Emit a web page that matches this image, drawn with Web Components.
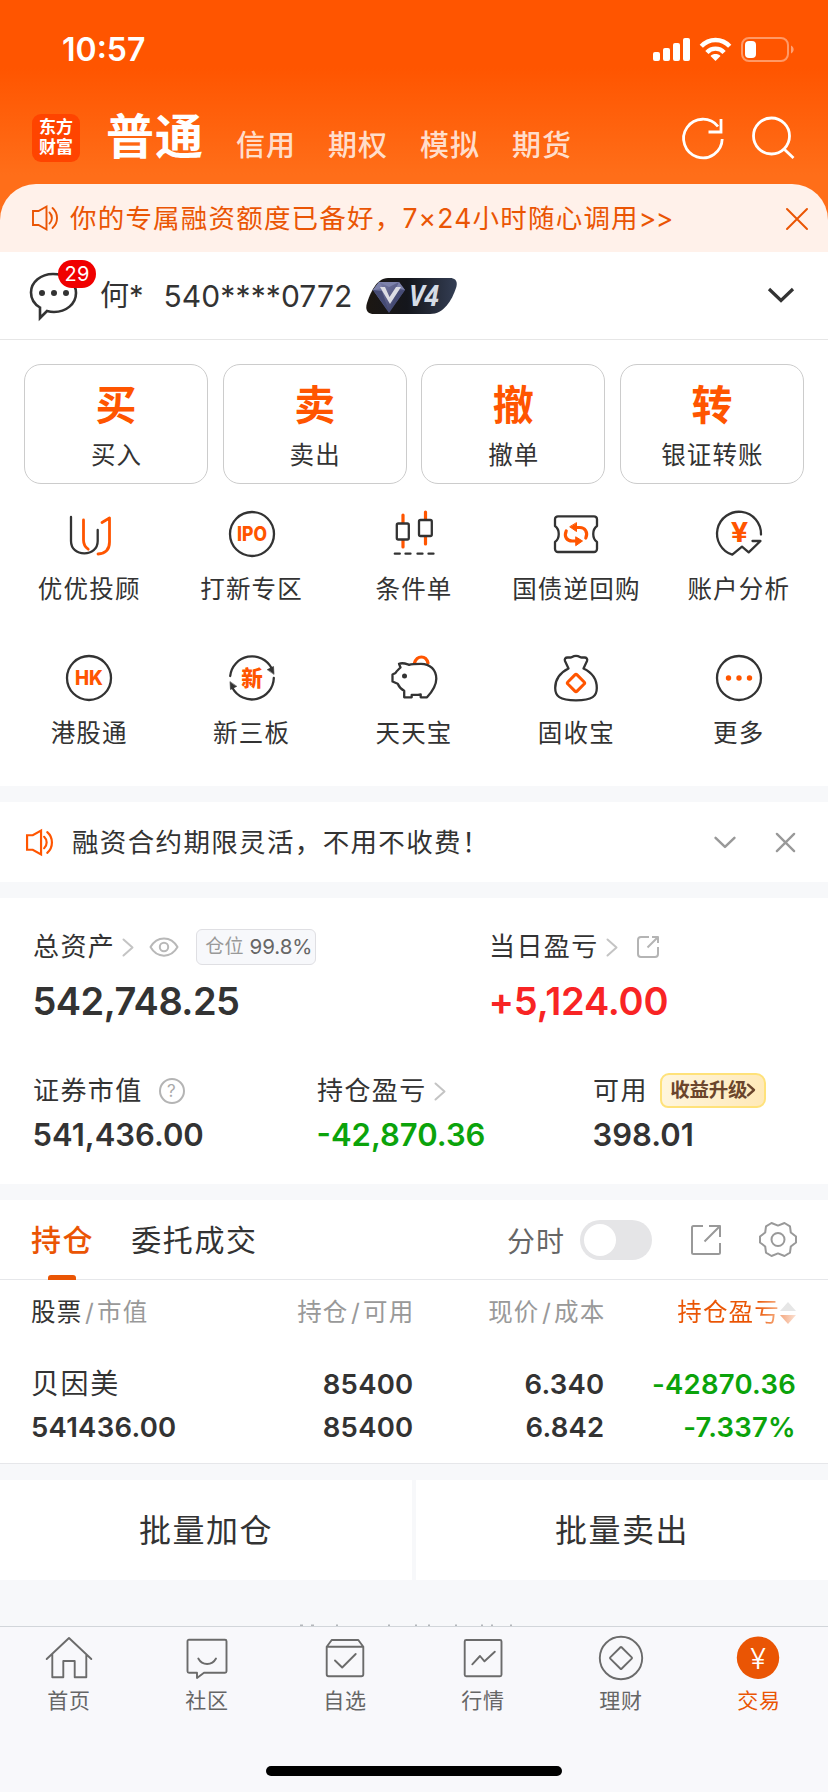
<!DOCTYPE html>
<html lang="zh-CN">
<head>
<meta charset="utf-8">
<title>交易</title>
<style>
  html, body {
    margin: 0;
    padding: 0;
  }
  body {
    width: 828px;
    height: 1792px;
    overflow: hidden;
    background: #f7f8fa;
    color: #333;
    font-family: Inter, "Noto Sans CJK SC", sans-serif;
  }
</style>
</head>
<body>
<trade-page></trade-page>

<script>
// Small base class: every component only declares its own template
class BaseElement extends HTMLElement {
  constructor() {
    super();
    this.attachShadow({ mode: 'open' });
  }

  connectedCallback() {
    this.shadowRoot.innerHTML = this.render();
  }

  attr(name, fallback = '') {
    return this.getAttribute(name) || fallback;
  }
}

const DARK = '#333';
const ORANGE = '#ff5500';

const icons = {
  // Header
  refresh: `<path d="M43.2 25A19.3 19.3 0 1 1 39 12.5"/><path d="M42 5v13H29.5"/>`,
  search: `<circle cx="22.5" cy="22" r="18"/><path d="M35.5 35.500L44.500 44"/>`,
  speaker: `<path d="M2 7h5.500l8-4.500v23L7.500 21H2z"/><path d="M18.500 8.500c3.200 3 3.200 8 0 11M21.500 4c6 5.200 6 14.800 0 20"/>`,
  close: `<path d="M3 3l20 20M23 3L3 23"/>`,
  down: `<path d="M2 2l12 11.500L26 2"/>`,
  right: `<path d="M1.500 1.500l9 8-9 8"/>`,
  bubble: `<path d="M11 36.500C5 33 2 27.500 2 21.500 2 11 12 3 24 3s23 8 23 19-10 19-22 19c-2.500 0-4.500-.3-7-1L11 47z"/><g fill="#333" stroke="none"><circle cx="13" cy="22" r="3"/><circle cx="25" cy="22" r="3"/><circle cx="37" cy="22" r="3"/></g>`,

  // Quick entries
  advisor: `<path d="M6 7v24c0 8 6 12.300 13.300 12.300S32.700 39 32.700 31V20"/><path d="M18.500 10v20c0 4 1.500 7 4.700 9.200M37 12.500l7.500-4.500v24c0 7-4 11.500-11.500 12" stroke="#ff5500" stroke-width="2.800"/>`,
  ipo: `<circle cx="24" cy="24" r="22"/><text x="24" y="31" font-size="19.500" textLength="30" lengthAdjust="spacingAndGlyphs">IPO</text>`,
  candle: `<path d="M13 5v32M35.500 2v32" stroke="#ff5500" stroke-width="3.200"/><rect x="6.800" y="13.500" width="12" height="16" rx="1.500" fill="#fff"/><rect x="29" y="10" width="12.800" height="16" rx="1.500" fill="#fff"/><path d="M4.800 43.700h5M15.500 43.700h5M27.500 43.700h5M38.500 43.700h5"/>`,
  repo: `<path d="M6 6.300h36a3 3 0 0 1 3 3V16c-5 3.500-5 12.500 0 16v7a3 3 0 0 1-3 3H6a3 3 0 0 1-3-3v-7c5-3.500 5-12.500 0-16V9.300a3 3 0 0 1 3-3z"/><g stroke="#ff5500" stroke-width="3.200"><path d="M14.200 21c-2.500 6 1 10 6 10H25M33.800 28c2.500-6-1-10.500-6-10.500H23"/></g><path d="M24 27l6.500 4-6.500 4.500zM24.500 13v8.500L18 17z" fill="#ff5500" stroke="#ff5500" stroke-width="1"/>`,
  analysis: `<path d="M46 24.500A22 22 0 1 0 17.300 44.700L27 36.700l6.700 5.600L45.500 31h-8"/><text x="24.400" y="32.300" font-size="26.500" style="font-weight:700" textLength="17.500" lengthAdjust="spacingAndGlyphs">¥</text>`,
  hk: `<circle cx="24" cy="24" r="22"/><text x="24" y="31" font-size="19.500" textLength="28" lengthAdjust="spacingAndGlyphs">HK</text>`,
  otc: `<path d="M2.200 22A22 22 0 0 1 43.500 14M45.800 24A22 22 0 0 1 4.500 34"/><path d="M39.500 15.500l6-3 .5 7.500zM8.500 32.500l-6 3-.5-7.500z" fill="#333" stroke-width=".6"/><text x="24" y="31.500" font-size="21.500">新</text>`,
  piggy: `<path d="M24.500 9c2.500-8 11.500-8 13.500 0" stroke="#ff5500" stroke-width="3.200"/><path d="M9 9.800c4-1.500 7 0 10 1 3-1 8-1 12-1 9 0 15.300 6 15.300 15 0 6-2.800 11.500-9.300 18.500h-6.300v-3c-3 .8-6 .8-9 .5v2.500h-7.500v-6.500c-3-1.500-5-3.500-6.500-7L2.500 27.500v-7l3-1.500c1.500-2.500 2.500-3 5-5.500z"/><circle cx="14.500" cy="22" r="2.500" fill="#333" stroke="none"/>`,
  bag: `<path d="M16.500 14.500L13 7c-.8-2 .5-3.500 2.500-3.500h3c1.500 0 2-1.700 5.500-1.700s4 1.700 5.500 1.700h3c2 0 3.300 1.500 2.500 3.500l-3.500 7.500C40 18.500 44.800 25.500 44.800 34c0 8-4 12.300-20.800 12.300S3.200 42 3.200 34c0-8.500 5.300-15.500 13.300-19.500z"/><rect x="17.500" y="22.500" width="13" height="13" rx="1.500" transform="rotate(45 24 29)" stroke="#ff5500" stroke-width="3"/>`,
  more: `<circle cx="24" cy="24" r="22"/><g fill="#ff5500" stroke="none"><circle cx="13.500" cy="24" r="2.700"/><circle cx="24" cy="24" r="2.700"/><circle cx="34.500" cy="24" r="2.700"/></g>`,

  // Assets and holdings
  eye: `<path d="M1.500 10C8-1.500 22-1.500 28.500 10 22 21.500 8 21.500 1.500 10z"/><circle cx="15" cy="10" r="4.200"/>`,
  share: `<path d="M12 1H4a3 3 0 0 0-3 3v14a3 3 0 0 0 3 3h14a3 3 0 0 0 3-3v-7M15 1h6v6M21 1L10.500 11.500"/>`,
  help: `<circle cx="13" cy="13" r="12"/><text x="13" y="19" font-size="17" style="font-weight:400;fill:#aaa;stroke:none">?</text>`,
  export: `<path d="M12 1H2.500A1.500 1.500 0 0 0 1 2.500v25A1.500 1.500 0 0 0 2.500 29h25a1.500 1.500 0 0 0 1.500-1.500V18M18 1h11v11M29 1L13.500 16.500"/>`,
  gear: `<path d="M12.500 2l6.500 2.600L25.500 2l5.500 3.300.8 6.200 5.200 4v6l-5.200 4-.8 6.200-5.500 3.300-6.500-2.600L12.500 35 7 31.700l-.8-6.200-5.200-4v-6l5.200-4L7 5.300z"/><circle cx="19" cy="18.500" r="6.500"/>`,

  // Tab bar
  home: `<path d="M1.700 25L24 4l22.300 21M7.300 20.300v22.900h11V27h11.400v16.200h11.600V20.300"/>`,
  community: `<path d="M6 5.700h36a1.500 1.500 0 0 1 1.500 1.500v30a1.500 1.500 0 0 1-1.500 1.500H21L14 44v-5.300H6a1.500 1.500 0 0 1-1.500-1.500v-30A1.500 1.500 0 0 1 6 5.700z"/><path d="M15.300 24.500c4 7.300 13.700 7.300 17.700 0"/>`,
  favorite: `<path d="M5.700 12.700h36.600v27.500a2 2 0 0 1-2 2H7.700a2 2 0 0 1-2-2zL10.700 6h26.600l5 6.700"/><path d="M14 26.500l7.200 7L34.700 20"/>`,
  market: `<rect x="5.700" y="6" width="36.800" height="36.300" rx="1.500"/><path d="M13.300 30.300L21 22l4.500 5.300 10.300-9.600"/>`,
  wealth: `<circle cx="24" cy="24" r="21.200"/><rect x="16" y="16" width="16" height="16" rx=".8" transform="rotate(45 24 24)"/>`,
  trade: `<circle cx="23" cy="23.700" r="21.200" fill="#ea5504" stroke="none"/><text x="23" y="34.500" font-size="29" style="font-weight:300;fill:#fff;stroke:none">¥</text>`
};

class UiIcon extends BaseElement {
  render() {
    const w = this.attr('w', '48');
    const h = this.attr('h', w);
    return `
      <style>
        :host { display: block; flex: none; width: ${w}px; height: ${h}px; }
        svg { display: block; overflow: visible; }
        text { font-family: Inter, "Noto Sans CJK SC", sans-serif; font-weight: 800; text-anchor: middle; fill: ${ORANGE}; stroke: none; }
      </style>
      <svg width="${w}" height="${h}" viewBox="${this.attr('box', `0 0 ${w} ${h}`)}" fill="none"
        stroke="${this.attr('color', DARK)}" stroke-width="${this.attr('stroke', '2.3')}"
        stroke-linecap="${this.attr('cap', 'round')}" stroke-linejoin="${this.attr('join', 'round')}">${icons[this.attr('name')]}</svg>
    `;
  }
}

class StatusBar extends BaseElement {
  render() {
    return `
      <style>
        :host { display: flex; justify-content: space-between; height: 99px; padding: 0 33px 0 62px; color: #fff; }
        .time { font-size: 32px; font-weight: 600; line-height: 100px; }
        svg { margin-top: 37px; }
      </style>
      <span class="time">10:57</span>
      <svg width="142" height="26" viewBox="0 0 142 26" fill="#fff">
        <rect x="0" y="15" width="7" height="9" rx="2"/>
        <rect x="10" y="11" width="7" height="13" rx="2"/>
        <rect x="20" y="6" width="7" height="18" rx="2"/>
        <rect x="30" y="1" width="7" height="23" rx="2"/>
        <path d="M62.500 24l-5-5c2.500-2.600 7.500-2.600 10 0z"/>
        <g fill="none" stroke="#fff" stroke-width="4.400">
          <path d="M48.300 9.300c7.700-8.400 20.700-8.400 28.400 0"/>
          <path d="M53.900 15.400c4.600-5 12.600-5 17.200 0"/>
        </g>
        <rect x="89" y="1" width="46" height="23" rx="7" fill="none" stroke="#fff" stroke-opacity=".4" stroke-width="2"/>
        <rect x="92" y="4" width="11" height="17" rx="4"/>
        <path d="M138 8.500c3.500 1.500 3.500 6.500 0 8z" fill-opacity=".45"/>
      </svg>
    `;
  }
}

class AppHeader extends BaseElement {
  render() {
    return `
      <style>
        :host { display: flex; height: 85px; padding: 0 31px 0 32px; color: #fff; }
        .logo { display: flex; flex-direction: column; align-items: center; box-sizing: border-box; width: 48px; height: 48px; margin-top: 15px; padding-top: 4px;
          border-radius: 9px; background: #ff4400; font-family: "Liberation Sans", "Noto Sans CJK SC", sans-serif; font-size: 17px; font-weight: 700; line-height: 20px; }
        .active { margin: 6px 0 0 26px; font-size: 48px; font-weight: 700; line-height: 64px; letter-spacing: 1px; }
        nav { display: flex; gap: 32px; margin: 25px 0 0 32px; }
        nav span { font-size: 29px; font-weight: 500; line-height: 44px; letter-spacing: 1px; color: rgba(255, 255, 255, .8); }
        .tools { display: flex; gap: 22px; margin: 15px 0 0 auto; }
      </style>
      <div class="logo"><span>东方</span><span>财富</span></div>
      <span class="active">普通</span>
      <nav><span>信用</span><span>期权</span><span>模拟</span><span>期货</span></nav>
      <div class="tools">
        <ui-icon name="refresh" w="48" color="#fff" stroke="2.800" cap="butt" join="miter"></ui-icon>
        <ui-icon name="search" w="48" color="#fff" stroke="2.800" cap="butt"></ui-icon>
      </div>
    `;
  }
}

class PromoBanner extends BaseElement {
  render() {
    return `
      <style>
        :host { display: flex; align-items: center; height: 68px; padding: 0 20px 0 31px; border-radius: 36px 36px 0 0; background: #fff1ea; color: #ea5504; }
        span { margin-left: 11px; font-size: 26.500px; line-height: 40px; letter-spacing: 1.200px; white-space: nowrap; }
        ::slotted(i) { font-style: normal; letter-spacing: -.7px; }
        .close { margin: 1px 0 0 auto; }
      </style>
      <ui-icon name="speaker" w="28" color="#ea5504" stroke="1.900" join="miter"></ui-icon>
      <span><slot></slot></span>
      <ui-icon class="close" name="close" w="22" box="2 2 22 22" color="#ea5504" stroke="2"></ui-icon>
    `;
  }
}

class VipBadge extends BaseElement {
  render() {
    return `
      <style>
        :host { display: block; width: 91px; height: 36px; }
        svg { display: block; }
        text { font-family: "Open Sans", sans-serif; font-weight: 700; font-style: italic; }
      </style>
      <svg width="91" height="36" viewBox="0 0 91 36">
        <defs>
          <linearGradient id="bg"><stop offset="0" stop-color="#1c1712"/><stop offset=".45" stop-color="#14161c"/><stop offset="1" stop-color="#343e54"/></linearGradient>
          <linearGradient id="gem" x1="0" y1="0" x2="1" y2="1"><stop offset="0" stop-color="#8084b0"/><stop offset="1" stop-color="#30345a"/></linearGradient>
        </defs>
        <path d="M22 0h62c6 0 8 4 6 10-4 12-12 26-26 26H8c-7 0-9-5-7-11C4 16 10 0 22 0z" fill="url(#bg)"/>
        <path d="M13 4h20l6 8-16 23L7 12z" fill="url(#gem)"/>
        <path d="M7 12l9 1 7 21zM39 12l-8 1-8 21z" fill="#454b74"/>
        <path d="M13 4l4 6-10 2zM33 4l-3 6 9 2zM13 4h20l-10 5z" fill="#7d82ab"/>
        <path d="M14 9h5l4.500 10L30 9h5L24 26z" fill="#dcdde4"/>
        <text x="43" y="28" font-size="28" textLength="30" lengthAdjust="spacingAndGlyphs" fill="#d5dce6">V4</text>
      </svg>
    `;
  }
}

class AccountBar extends BaseElement {
  render() {
    return `
      <style>
        :host { display: flex; height: 87px; padding: 0 34px 0 29px; border-bottom: 1px solid #e6e6e6; background: #fff; }
        .msg { position: relative; width: 50px; margin-top: 19px; }
        .count { position: absolute; left: 29px; top: -11px; width: 38px; height: 28px; border-radius: 14px; background: #f00000; color: #fff; font-size: 20px; line-height: 28px; letter-spacing: .2px; text-align: center; }
        .name, .no { font-size: 30px; line-height: 88px; white-space: nowrap; }
        .name { margin-left: 21px; font-size: 29px; }
        .no { width: 188px; margin-left: 20px; letter-spacing: .1px; }
        vip-badge { margin: 26px 0 0 14px; }
        .arrow { margin: 35px 0 0 auto; }
      </style>
      <div class="msg">
        <ui-icon name="bubble" w="50" stroke="2.600" join="miter"></ui-icon>
        <span class="count">29</span>
      </div>
      <span class="name">何*</span>
      <span class="no">540****0772</span>
      <vip-badge></vip-badge>
      <ui-icon class="arrow" name="down" w="26" h="15" box="1 0 26 15" stroke="3.200" cap="butt" join="miter"></ui-icon>
    `;
  }
}

class TradeButton extends BaseElement {
  render() {
    return `
      <style>
        :host { display: flex; flex-direction: column; align-items: center; box-sizing: border-box; height: 120px; border: 1.500px solid #ccc; border-radius: 17px; }
        b { margin-top: 13px; color: ${ORANGE}; font-size: 41px; font-weight: 700; line-height: 54px; }
        span { margin-top: 7px; font-size: 24.500px; line-height: 32px; letter-spacing: 1.100px; margin-right: -1px; }
      </style>
      <b>${this.attr('mark')}</b>
      <span><slot></slot></span>
    `;
  }
}

class QuickEntry extends BaseElement {
  render() {
    return `
      <style>
        :host { display: flex; flex-direction: column; align-items: center; height: 144px; }
        span { margin-top: 15px; font-size: 24.500px; line-height: 32px; letter-spacing: 1.200px; white-space: nowrap; }
      </style>
      <ui-icon name="${this.attr('icon')}"></ui-icon>
      <span><slot></slot></span>
    `;
  }
}

class NoticeBar extends BaseElement {
  render() {
    return `
      <style>
        :host { display: flex; align-items: center; height: 80px; margin: 16px 0; padding: 0 33px 0 25px; background: #fff; }
        span { margin-left: 18px; font-size: 26.500px; line-height: 40px; letter-spacing: 1.350px; }
        .down { margin-left: auto; }
        .close { margin-left: 40px; }
      </style>
      <ui-icon name="speaker" w="29" box="0 0 28 28" color="${ORANGE}" stroke="2.100" join="miter"></ui-icon>
      <span><slot></slot></span>
      <ui-icon class="down" name="down" w="22" h="13" box="0 0 28 16" color="#999" stroke="3.200"></ui-icon>
      <ui-icon class="close" name="close" w="19" box="2 2 22 22" color="#999" stroke="2.700"></ui-icon>
    `;
  }
}

class AssetItem extends BaseElement {
  render() {
    return `
      <style>
        :host { display: block; }
        .label { display: flex; align-items: center; height: 36px; font-size: 26px; line-height: 36px; letter-spacing: 1.400px; white-space: nowrap; }
        .value { font-size: 31px; font-weight: 600; line-height: 40px; margin: 6px 0 0 -.5px; color: var(--value-color, #333); }
        :host([size="large"]) .value { font-size: 38px; line-height: 48px; margin-top: 12px; letter-spacing: var(--value-spacing, -.55px); }
      </style>
      <div class="label">${this.attr('label')}<slot></slot></div>
      <div class="value">${this.attr('value')}</div>
    `;
  }
}

class AssetPanel extends BaseElement {
  render() {
    const arrow = `<ui-icon class="arrow" name="right" w="12" h="19" color="#c4c4c4" stroke="2"></ui-icon>`;
    return `
      <style>
        :host { display: block; height: 286px; background: #fff; }
        .row { display: grid; padding-left: 33px; }
        .top { grid-template-columns: 456px 1fr; padding-top: 31px; }
        .bottom { grid-template-columns: 284px 276px 1fr; padding-top: 48px; }
        .arrow { margin-left: 7px; }
        .eye { margin-left: 15px; }
        .share { margin-left: 19px; }
        .help { margin-left: 16px; }
        .tag { display: inline-flex; align-items: center; box-sizing: border-box; width: 120px; height: 36px; margin-left: 17px; padding-left: 8px; border: 1px solid #dfdfe3; border-radius: 6px; background: #f7f8fb; color: #999; font-size: 19px; line-height: 34px; letter-spacing: .2px; }
        .tag i { margin-left: 6px; color: #666; font-size: 20.500px; font-style: normal; letter-spacing: -.1px; }
        .up { display: flex; align-items: center; justify-content: center; box-sizing: border-box; width: 106px; height: 35px; margin: -2px 0 0 12px; border: 2px solid #ffe27a; border-radius: 9px 10px 9px 8px; background: linear-gradient(100deg, #fff6de, #ffe9b8); color: #6b452c; font-size: 19.500px; font-weight: 700; line-height: 30px; letter-spacing: -.2px; }
        .red { --value-color: #f82424; --value-spacing: -.2px; }
        .green { --value-color: #0ba30b; }
      </style>
      <div class="row top">
        <asset-item size="large" label="总资产" value="542,748.25">
          ${arrow}<ui-icon class="eye" name="eye" w="30" h="20" color="#b8b8b8" stroke="2"></ui-icon>
          <span class="tag">仓位<i>99.8%</i></span>
        </asset-item>
        <asset-item class="red" size="large" label="当日盈亏" value="+5,124.00">
          ${arrow}<ui-icon class="share" name="share" w="22" color="#b4b4b4" stroke="2" cap="butt"></ui-icon>
        </asset-item>
      </div>
      <div class="row bottom">
        <asset-item label="证券市值" value="541,436.00">
          <ui-icon class="help" name="help" w="26" color="#b4b4b4" stroke="2"></ui-icon>
        </asset-item>
        <asset-item class="green" label="持仓盈亏" value="-42,870.36">${arrow}</asset-item>
        <asset-item label="可用" value="398.01">
          <span class="up">收益升级<ui-icon name="right" w="8" h="14" box="0 0 12 19" color="#6b452c" stroke="3.600"></ui-icon></span>
        </asset-item>
      </div>
    `;
  }
}

class HoldingsTabs extends BaseElement {
  render() {
    return `
      <style>
        :host { display: flex; align-items: center; height: 79px; margin-top: 16px; padding: 0 31px; border-bottom: 1px solid #e6e7ea; background: #fff; }
        .tab { position: relative; font-size: 30px; line-height: 80px; letter-spacing: 1.600px; white-space: nowrap; }
        .tab + .tab { margin-left: 37px; }
        .active { color: #ea5504; font-weight: 500; }
        .active::after { content: ""; position: absolute; left: 17px; bottom: 0; width: 28px; height: 5px; border-radius: 3px 3px 0 0; background: #ea5504; }
        .mode { margin-left: auto; color: #666; font-size: 28px; letter-spacing: 1px; }
        .switch { width: 64px; height: 32px; margin-left: 15px; padding: 4px; border-radius: 20px; background: #e5e5e7; }
        .switch::before { content: ""; display: block; width: 32px; height: 32px; border-radius: 50%; background: #fff; }
        .export { margin-left: 39px; }
        .gear { margin-left: 38px; }
      </style>
      <span class="tab active">持仓</span>
      <span class="tab">委托成交</span>
      <span class="mode">分时</span>
      <span class="switch"></span>
      <ui-icon class="export" name="export" w="30" color="#999" stroke="2" cap="butt"></ui-icon>
      <ui-icon class="gear" name="gear" w="38" h="37" color="#999" stroke="2"></ui-icon>
    `;
  }
}

class HoldingsTable extends BaseElement {
  render() {
    return `
      <style>
        :host { display: block; height: 183px; padding: 0 32px 0 31px; border-bottom: 1px solid #e6e7ea; background: #fff; }
        .grid { display: grid; grid-template-columns: 190px 192.500px 191px 1fr; text-align: right; }
        .grid > :first-child { text-align: left; }
        .head { height: 83px; color: #999; font-size: 24.500px; line-height: 65px; letter-spacing: 1.200px; white-space: nowrap; }
        .head div { margin: 0 -1px 0 0; }
        .head em { color: #333; font-style: normal; }
        .head .sort { margin: 0; }
        .slash { padding: 0 2px 0 2.500px; }
        .sort { display: flex; justify-content: flex-end; align-items: center; height: 65px; }
        .sort span { background: linear-gradient(90deg, #ea5504 78%, #f7b78f); -webkit-background-clip: text; color: transparent; }
        .row { font-size: 27.500px; font-weight: 600; line-height: 43px; letter-spacing: .25px; }
        .name { font-size: 28px; font-weight: 400; letter-spacing: 1.600px; }
        .down { color: #0ba30b; }
      </style>
      <div class="grid head">
        <div><em>股票</em><span class="slash">/</span>市值</div>
        <div>持仓<span class="slash">/</span>可用</div>
        <div>现价<span class="slash">/</span>成本</div>
        <div class="sort">
          <span>持仓盈亏</span>
          <svg width="16" height="22" viewBox="0 0 16 22">
            <defs><linearGradient id="s"><stop offset="0" stop-color="#f4a880"/><stop offset="1" stop-color="#fbe0d2"/></linearGradient></defs>
            <path d="M0 9l8-9 8 9z" fill="#e6e6e6"/><path d="M0 13l8 9 8-9z" fill="url(#s)"/>
          </svg>
        </div>
      </div>
      <div class="grid row">
        <div><div class="name">贝因美</div>541436.00</div>
        <div>85400<br>85400</div>
        <div>6.340<br>6.842</div>
        <div class="down">-42870.36<br>-7.337%</div>
      </div>
    `;
  }
}

class BatchActions extends BaseElement {
  render() {
    return `
      <style>
        :host { display: grid; grid-template-columns: 1fr 1fr; gap: 4px; height: 100px; margin-top: 16px; }
        div { background: #fff; font-size: 32px; line-height: 102px; letter-spacing: 1.500px; text-align: center; height: 100px; }
      </style>
      <div>批量加仓</div>
      <div>批量卖出</div>
    `;
  }
}

// Only the upper edge of the footnote shows above the tab bar
class FootnoteEdge extends BaseElement {
  render() {
    return `
      <style>
        :host { display: block; height: 46px; }
        svg { display: block; }
      </style>
      <svg width="828" height="46" stroke="#b4b7bb" stroke-width="1.500">
        <path d="M300 45.300h3M311 45.300h3M336 45.300h2M388 45.300h2M415 45.300h2M428 45.300h2M455 45.300h2M481 45.300h2M491 45.300h2M510 45.300h2"/>
      </svg>
    `;
  }
}

class TabItem extends BaseElement {
  render() {
    const active = this.hasAttribute('active');
    return `
      <style>
        :host { display: flex; flex-direction: column; align-items: center; padding-top: 7px; color: ${active ? '#ea5504' : '#666'}; }
        span { margin-top: 5px; font-size: 21px; line-height: 28px; letter-spacing: .8px; }
      </style>
      <ui-icon name="${this.attr('icon')}" color="#6b6b6b" stroke="1.900"></ui-icon>
      <span><slot></slot></span>
    `;
  }
}

class TabBar extends BaseElement {
  render() {
    return `
      <style>
        :host { display: block; height: 165px; border-top: 1px solid #d2d6da; background: #f8f8fb; }
        nav { display: grid; grid-template-columns: repeat(6, 1fr); height: 139px; }
        .home { width: 296px; height: 10px; margin: 0 auto; border-radius: 5px; background: #000; }
      </style>
      <nav>
        <tab-item icon="home">首页</tab-item>
        <tab-item icon="community">社区</tab-item>
        <tab-item icon="favorite">自选</tab-item>
        <tab-item icon="market">行情</tab-item>
        <tab-item icon="wealth">理财</tab-item>
        <tab-item icon="trade" active>交易</tab-item>
      </nav>
      <div class="home"></div>
    `;
  }
}

class TradePage extends BaseElement {
  render() {
    return `
      <style>
        :host { display: block; }
        .top { height: 252px; background: linear-gradient(180deg, #ff5500 0, #ff5500 68px, #ff6e19 175px, #ff6e19 100%); }
        .trade { display: grid; grid-template-columns: repeat(4, 184px); justify-content: space-between; padding: 24px 24px 26px; background: #fff; }
        .entries { display: grid; grid-template-columns: repeat(5, 1fr); height: 276px; padding: 0 8px; background: #fff; }
      </style>
      <div class="top">
        <status-bar></status-bar>
        <app-header></app-header>
        <promo-banner>你的专属融资额度已备好，7×24小时随心调用<i>&gt;&gt;</i></promo-banner>
      </div>
      <account-bar></account-bar>
      <div class="trade">
        <trade-button mark="买">买入</trade-button>
        <trade-button mark="卖">卖出</trade-button>
        <trade-button mark="撤">撤单</trade-button>
        <trade-button mark="转">银证转账</trade-button>
      </div>
      <div class="entries">
        <quick-entry icon="advisor">优优投顾</quick-entry>
        <quick-entry icon="ipo">打新专区</quick-entry>
        <quick-entry icon="candle">条件单</quick-entry>
        <quick-entry icon="repo">国债逆回购</quick-entry>
        <quick-entry icon="analysis">账户分析</quick-entry>
        <quick-entry icon="hk">港股通</quick-entry>
        <quick-entry icon="otc">新三板</quick-entry>
        <quick-entry icon="piggy">天天宝</quick-entry>
        <quick-entry icon="bag">固收宝</quick-entry>
        <quick-entry icon="more">更多</quick-entry>
      </div>
      <notice-bar>融资合约期限灵活，不用不收费！</notice-bar>
      <asset-panel></asset-panel>
      <holdings-tabs></holdings-tabs>
      <holdings-table></holdings-table>
      <batch-actions></batch-actions>
      <footnote-edge></footnote-edge>
      <tab-bar></tab-bar>
    `;
  }
}

customElements.define('ui-icon', UiIcon);
customElements.define('status-bar', StatusBar);
customElements.define('app-header', AppHeader);
customElements.define('promo-banner', PromoBanner);
customElements.define('vip-badge', VipBadge);
customElements.define('account-bar', AccountBar);
customElements.define('trade-button', TradeButton);
customElements.define('quick-entry', QuickEntry);
customElements.define('notice-bar', NoticeBar);
customElements.define('asset-item', AssetItem);
customElements.define('asset-panel', AssetPanel);
customElements.define('holdings-tabs', HoldingsTabs);
customElements.define('holdings-table', HoldingsTable);
customElements.define('batch-actions', BatchActions);
customElements.define('footnote-edge', FootnoteEdge);
customElements.define('tab-item', TabItem);
customElements.define('tab-bar', TabBar);
customElements.define('trade-page', TradePage);
</script>
</body>
</html>
